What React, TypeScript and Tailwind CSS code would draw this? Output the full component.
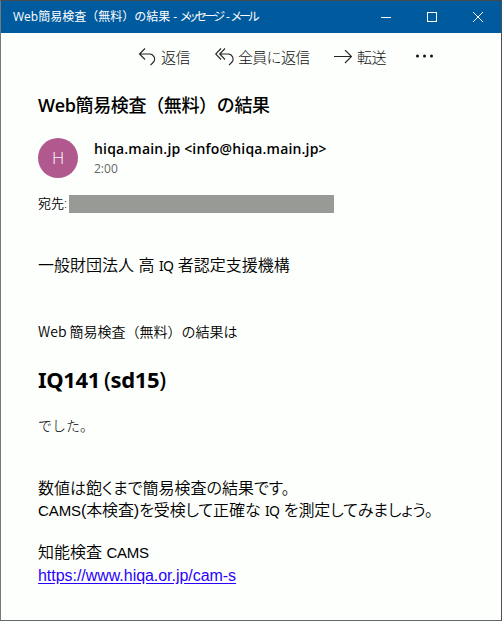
import type { ReactNode } from "react";

interface RowProps {
  children: ReactNode;
  className?: string;
}

const ui = "font-['Open_Sans','Noto_Sans_CJK_JP',sans-serif]";
const gothic = "font-['Liberation_Sans','Noto_Sans_CJK_JP',sans-serif]";

function Line({ children, className = "" }: RowProps) {
  return <p className={`whitespace-nowrap ${className}`}>{children}</p>;
}

function Action({ children, className = "" }: RowProps) {
  return (
    <button className={`flex items-center whitespace-nowrap ${className}`}>
      {children}
    </button>
  );
}

function Iq() {
  return <span className="font-['Noto_Sans',sans-serif] text-[14px] font-normal tracking-[-0.6px]">IQ</span>;
}

function ReplyIcon() {
  return (
    <svg width="18" height="18" viewBox="0 0 18 18" fill="none" stroke="#222" strokeWidth="1.1">
      <path d="M7 .5 1.5 6 7 11.500M1.500 6h10a5 5 0 0 1 3.600 8.500L12.500 17.200" />
    </svg>
  );
}

function ReplyAllIcon() {
  return (
    <svg width="19" height="18" viewBox="0 0 19 18" fill="none" stroke="#222" strokeWidth="1.1">
      <path d="M6 .5.7 6 6 11.500M10 .5 4.700 6l5.300 5.500M4.700 6h8.300a5 5 0 0 1 3.600 8.500L14 17.200" />
    </svg>
  );
}

function ForwardIcon() {
  return (
    <svg width="18" height="14" viewBox="0 0 18 14" fill="none" stroke="#222" strokeWidth="1.1">
      <path d="M0 6.500h17.500M11 0l6.500 6.500L11 13" />
    </svg>
  );
}

export default function App() {
  return (
    <div className={`flex h-[621px] w-[502px] flex-col overflow-hidden border border-t-[#484b4d] border-r-[#4c4f54] border-b-[#626569] border-l-[#777] bg-[#fdfffc] text-black ${ui}`}>
      <header className="flex h-8 shrink-0 items-center bg-[#005a9e] pl-3 text-white">
        <Line className="w-[250px] text-[12px] leading-8">
          <span>Web簡易検査（無料）の結果 - </span>
          <span className="inline-block tracking-[-2.5px] [font-feature-settings:'palt'] [word-spacing:3px]">メッセージ - メール</span>
        </Line>
        <div className="ml-auto flex">
          <svg width="138" height="32" viewBox="0 0 138 32" fill="none" stroke="white" shapeRendering="crispEdges">
            <path d="M18 16.5h10" />
            <rect x="64.5" y="11.5" width="9" height="9" />
            <path d="m110 11 10 10M120 11l-10 10" shapeRendering="auto" />
          </svg>
        </div>
      </header>

      <nav className="flex h-12 shrink-0 items-center pl-[137px] text-[15px] font-light text-[#111]">
        <Action className="w-[77px] gap-[5px]"><ReplyIcon /><span className="tracking-[-0.5px]">返信</span></Action>
        <Action className="w-[119px] gap-[4px]"><ReplyAllIcon /><span className="tracking-[-0.7px]">全員に返信</span></Action>
        <Action className="w-[81px] gap-[5px]"><ForwardIcon /><span className="tracking-[-0.5px]">転送</span></Action>
        <svg className="mb-[2px]" width="20" height="4" viewBox="0 0 20 4" fill="#111">
          <circle cx="2.5" cy="2" r="1.5" />
          <circle cx="9.5" cy="2" r="1.5" />
          <circle cx="16.5" cy="2" r="1.5" />
        </svg>
      </nav>

      <main className="pl-[37px]">
        <h1 className="mt-[10px] text-[18px] leading-7 font-medium tracking-[-0.35px] whitespace-nowrap">
          <span className="font-semibold">Web</span>簡易検査（無料）の結果
        </h1>
        <div className="mt-[19px] flex h-10 items-center gap-4">
          <div className="flex size-10 items-center justify-center rounded-full bg-[#b1588f] text-[17px] font-light text-white">H</div>
          <div>
            <Line className="mt-px text-[14px] leading-5 font-semibold tracking-[0.18px]">hiqa.main.jp &lt;info@hiqa.main.jp&gt;</Line>
            <Line className="text-[12px] leading-5 text-[#666]">2:00</Line>
          </div>
        </div>
        <div className="mt-4 flex h-5 items-center">
          <Line className="w-[31px] text-[13px] font-[350]">宛先:</Line>
          <div className="h-[18px] w-[265px] bg-[#989a96]" />
        </div>

        <article className={`text-[16px] font-[350] ${gothic}`}>
          <Line className="mt-10 leading-6">
            一般財団法人 高 <Iq /> 者認定支援機構
          </Line>
          <Line className="mt-[41px] font-['Noto_Sans_CJK_JP',sans-serif] text-[14px] leading-6 font-[350]">Web 簡易検査（無料）の結果は</Line>
          <h2 className="mt-5 font-['Noto_Sans',sans-serif] text-[22px] leading-8 font-bold tracking-[-0.35px] whitespace-nowrap">
            IQ141<span className="pl-1 font-medium">(</span>sd15<span className="font-medium">)</span>
          </h2>
          <Line className="mt-[19px] text-[14px] leading-6 font-light">でした。</Line>
          <Line className="mt-10 leading-[22px] [font-feature-settings:'palt']">数値は飽くまで簡易検査の結果です。</Line>
          <Line className="leading-[22px] tracking-[-0.1px] [font-feature-settings:'palt']">
            <span className="text-[15px]">CAMS</span>(本検査)を受検して正確な <Iq /> を測定してみましょう。
          </Line>
          <Line className="mt-5 leading-[22px]">
            知能検査 <span className="text-[15px] tracking-[-0.3px]">CAMS</span>
          </Line>
          <a href="https://www.hiqa.or.jp/cam-s" className="mt-px block w-max leading-[22px] tracking-[-0.04px] whitespace-nowrap text-[#2a00ff] underline underline-offset-2">
            https://www.hiqa.or.jp/cam-s
          </a>
        </article>
      </main>
    </div>
  );
}
